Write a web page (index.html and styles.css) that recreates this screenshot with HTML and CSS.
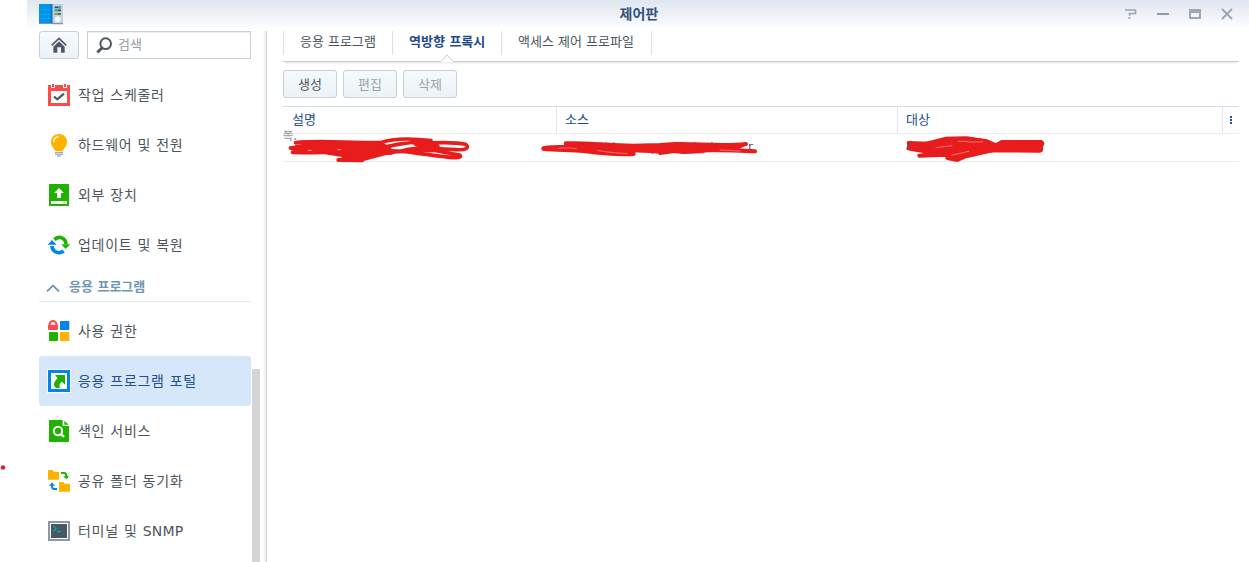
FILE: index.html
```html
<!DOCTYPE html>
<html lang="ko">
<head>
    <meta charset="UTF-8">
    <meta name="viewport" content="width=device-width, initial-scale=1.0">
    <title>제어판</title>
    <link rel="stylesheet" href="styles.css">
</head>
<body>
    <svg class="red-dot" width="6" height="6"><circle cx="3" cy="3.500" r="2.200" fill="#e81c1c"/></svg>
    <div class="window">
        <header class="titlebar">
            <svg class="app-icon" width="24" height="22" viewBox="0 0 72 66">
                <path d="M0 3h41v60H0z" fill="#0495ea"/>
                <path d="M33 3h8v60h-8z" fill="#0a7ad6"/>
                <path d="M41 3h31v58H41z" fill="#c9d1d6"/>
                <path d="M0 60h41v3H0zM41 60h31v4H41z" fill="#7f95a5"/>
                <path d="M3 20h4M12 20h23M3 34h4M12 34h23M3 46h4M12 46h23" stroke="#17b3ee" stroke-width="2"/>
                <path d="M47 13h19M47 22h19M47 33h19" stroke="#3f4a55" stroke-width="5"/>
                <path d="M58 14h8M47 22h10" stroke="#12b9e6" stroke-width="5"/>
                <path d="M47 33h10" stroke="#6bc713" stroke-width="5"/>
                <circle cx="56" cy="49" r="10" fill="#f2fbff" stroke="#a8d4e8" stroke-width="2"/>
            </svg>
            <h1>제어판</h1>
            <div class="controls">
                <svg width="12" height="12" viewBox="0 0 12 12"><path d="M0 2h10.500v3.500H4.500v2.300M3.300 10h2.200" fill="none" stroke="#9da4ad" stroke-width="1.600"/></svg>
                <svg width="12" height="12" viewBox="0 0 12 12"><path d="M0 6h12" stroke="#949ba4" stroke-width="2"/></svg>
                <svg width="12" height="12" viewBox="0 0 12 12"><path d="M0 1h12v10H0zM2 5v4h8V5z" fill="#a0a7b1" fill-rule="evenodd"/></svg>
                <svg width="12" height="12" viewBox="0 0 12 12"><path d="M1 1l10 10M11 1L1 11" stroke="#9da4ad" stroke-width="1.800"/></svg>
            </div>
        </header>

        <div class="content">
            <nav class="sidebar">
                <div class="search-row">
                    <button class="home">
                        <svg width="16" height="16" viewBox="0 0 48 48"><path d="M2 25L24 4l22 21" fill="none" stroke="#4f5965" stroke-width="5"/><path d="M7 29L24 13l17 16v18H30V31H19v16H7z" fill="#4f5965"/></svg>
                    </button>
                    <label class="search">
                        <svg width="17" height="17" viewBox="0 0 51 51"><circle cx="29" cy="20" r="16" fill="none" stroke="#4f5965" stroke-width="6"/><path d="M18 33L4 46" stroke="#4f5965" stroke-width="9"/></svg>
                        <input type="text" placeholder="검색">
                    </label>
                </div>
                <ul class="menu">
                    <li>
                        <svg width="22" height="22" viewBox="0 0 66 66"><path d="M0 3h66v63H0z" fill="#fc4b4b"/><path d="M9 21h48v36H9z" fill="#fff"/><path d="M9 0h12v12H9zM45 0h12v12H45z" fill="#fff"/><path d="M12 0h6v9h-6zM48 0h6v9h-6z" fill="#fc4b4b"/><path d="M18 38l10 8 20-17" fill="none" stroke="#4f5965" stroke-width="7"/></svg>
                        <span>작업 스케줄러</span>
                    </li>
                    <li>
                        <svg width="22" height="22" viewBox="0 0 66 66"><path d="M33 0C19 0 9 10 9 24c0 12 7 17 11 23 2 3 2 5 4 5h18c2 0 2-2 4-5 4-6 11-11 11-23C57 10 47 0 33 0z" fill="#ffb200"/><path d="M17 25c0-9 6-16 15-17" fill="none" stroke="#fff" stroke-width="4"/><path d="M21 56h24M21 61h24M27 66h12" stroke="#8b97a5" stroke-width="3"/></svg>
                        <span>하드웨어 및 전원</span>
                    </li>
                    <li>
                        <svg width="22" height="22" viewBox="0 0 66 66"><rect x="3" width="60" height="66" rx="2" fill="#1eb300"/><path d="M33 12l15 15h-9v15H27V27h-9zM9 51h48v9H9z" fill="#fff"/><path d="M45 54h6v3h-6z" fill="#ffb200"/></svg>
                        <span>외부 장치</span>
                    </li>
                    <li>
                        <svg width="22" height="22" viewBox="0 0 66 66"><path d="M19 17C33 3 53 12 54 30" fill="none" stroke="#1eb300" stroke-width="11"/><path d="M40 31h27L53 45z" fill="#1eb300"/><path d="M47 51C33 62 13 54 12 36" fill="none" stroke="#0086e5" stroke-width="11"/><path d="M-1 32L12 18l14 14z" fill="#0086e5"/></svg>
                        <span>업데이트 및 복원</span>
                    </li>
                    <li class="category">
                        <svg width="14" height="9" viewBox="0 0 14 9"><path d="M1 8.300L7 2.500l6 5.800" fill="none" stroke="#7096b4" stroke-width="1.800"/></svg>
                        <span>응용 프로그램</span>
                    </li>
                    <li>
                        <svg width="22" height="22" viewBox="0 0 66 66"><path d="M0 14h30v13q0 3-3 3H3q-3 0-3-3z" fill="#fc4b4b"/><path d="M5 16V12a10 9 0 0 1 20 0v4" fill="none" stroke="#fc4b4b" stroke-width="6"/><rect x="36" y="3" width="28" height="27" rx="2" fill="#0086e5"/><rect x="3" y="36" width="27" height="27" rx="2" fill="#1eb300"/><rect x="36" y="36" width="28" height="27" rx="2" fill="#ffb200"/></svg>
                        <span>사용 권한</span>
                    </li>
                    <li class="selected">
                        <svg width="24" height="24" viewBox="0 0 72 72"><path d="M0 0h72v72H0z" fill="#fff"/><path d="M3 3h66v66H3zM12 12v48h48V12z" fill="#0086e5" fill-rule="evenodd"/><path d="M24 18h30v29l-9-9c-9 6-9 12-5 19H27C17 48 20 39 32 28z" fill="#1eb300"/></svg>
                        <span>응용 프로그램 포털</span>
                    </li>
                    <li>
                        <svg width="22" height="22" viewBox="0 0 66 66"><path d="M3 2q0-2 2-2h39v18h19v46q0 2-2 2H5q-2 0-2-2zM49 2l13 12H49z" fill="#1eb300"/><circle cx="30" cy="33" r="12.500" fill="none" stroke="#fff" stroke-width="6"/><path d="M38 41l10 10" stroke="#fff" stroke-width="7"/></svg>
                        <span>색인 서비스</span>
                    </li>
                    <li>
                        <svg width="22" height="22" viewBox="0 0 66 66"><path d="M0 2q0-2 2-2h11l4 5h14q2 0 2 2v22H0zM33 38q0-2 2-2h11l4 5h14q2 0 2 2v22H33z" fill="#ffb200"/><path d="M39 9h9q7 0 7 8v3" fill="none" stroke="#1eb300" stroke-width="6"/><path d="M46 19h18l-9 9z" fill="#1eb300"/><path d="M27 57h-8q-7 0-7-8v-3" fill="none" stroke="#0086e5" stroke-width="6"/><path d="M3 47h18l-9-10z" fill="#0086e5"/></svg>
                        <span>공유 폴더 동기화</span>
                    </li>
                    <li>
                        <svg width="22" height="22" viewBox="0 0 66 66"><path d="M0 3h66v60H0z" fill="#8b97a5"/><path d="M6 9h54v48H6z" fill="#fff"/><path d="M9 12h48v42H9z" fill="#4b5663"/><path d="M16 18l8 8-8 8M27 35h12" fill="none" stroke="#00b2b4" stroke-width="3.500"/></svg>
                        <span>터미널 및 <span class="latin">SNMP</span></span>
                    </li>
                </ul>
                <div class="scrollbar"></div>
            </nav>

            <main class="main">
                <div class="tabs">
                    <a class="tab tab-app">응용 프로그램</a>
                    <a class="tab tab-proxy active">역방향 프록시
                        <svg class="notch" width="14" height="8" viewBox="0 0 14 8"><path d="M0 7.500L7 .7l7 6.800V8H0z" fill="#fff"/><path d="M0 7.500h1L7 .9l6 6.600h1" fill="none" stroke="#ccc"/></svg>
                    </a>
                    <a class="tab tab-access">액세스 제어 프로파일</a>
                </div>
                <div class="toolbar">
                    <button>생성</button>
                    <button disabled>편집</button>
                    <button disabled>삭제</button>
                </div>
                <div class="grid">
                    <div class="grid-row grid-head">
                        <div>설명</div>
                        <div>소스</div>
                        <div>대상</div>
                        <div class="more"><i></i><i></i><i></i></div>
                    </div>
                    <div class="grid-row grid-body">
                        <div>
                            <span class="page-label">쪽.</span>
                            <svg class="mark mark-1" width="210" height="70" viewBox="0 0 630 210">
                                <path d="M62 128C130 122 200 128 320 128L300 142C210 137 120 138 47 144C120 148 180 140 260 144C190 154 120 156 53 157C130 160 230 148 350 158L210 163L285 168L205 175L262 181L190 180" stroke-width="12"/>
                                <path class="solid" d="M62 138L130 128H318L345 145L358 158L330 163L288 174L262 181L215 170L150 160L55 158z"/>
                                <path d="M318 128C350 116 410 115 468 122C420 127 350 130 310 150M420 131C480 127 540 125 572 133C585 143 574 151 545 149C500 148 450 141 420 131C440 145 500 156 554 165C561 170 552 174 535 173C490 168 430 160 385 154L330 152" stroke-width="11"/>
                                <path class="solid" d="M415 128l75 8 5 18-90 1-50 3 40-12 40-5z"/>
                                <path d="M100 151h9M188 149h9" stroke="#fff" stroke-width="2"/>
                            </svg>
                        </div>
                        <div>
                            <span class="host-end">r</span>
                            <svg class="mark mark-2" width="240" height="70" viewBox="0 0 720 210">
                                <path d="M40 145C70 140 110 139 165 143M40 146C75 151 120 149 160 153M107 130C160 127 230 137 310 137L390 135L436 132C500 130 570 140 648 132M135 135C180 153 240 160 311 162C250 166 200 158 160 153C240 143 330 156 398 150L390 159C440 149 500 142 675 154C600 153 550 143 460 155L520 154" stroke-width="12"/>
                                <path class="solid" d="M110 130l90 3 110 3h80l46-4 110 5 60 3 42-6-30 13 20 6-118 1-60 5-60-6-12 5-75-6-5 9-60-1-90-9-53-8z"/>
                                <path d="M85 145c20-2 38-2 54 1M204 152c30 5 60 7 88 9M570 150l60 3" stroke="#fbc4c4" stroke-width="1.500" fill="none"/>
                                <path d="M207 128h8M226 128h4M250 128h4M493 127h5M544 127h4M365 160h5" stroke="#5a6470" stroke-width="2"/>
                            </svg>
                        </div>
                        <div>
                            <svg class="mark mark-3" width="180" height="70" viewBox="0 0 540 210">
                                <path d="M56 129L140 132L175 116L230 115L290 124L175 132L65 146L55 145L100 153L295 137L88 167L210 163L300 151L172 174L202 180L265 151L450 152" stroke-width="12"/>
                                <path d="M58 129l30 6 80-20 65 1 60 8 25 11 17-10h119q8 4 0 14v12H310l-75 17-60 1-35-16-75-5z" stroke-width="10" class="wide"/>
                                <path d="M138 143l48-6M184 166l52-12M204 124h28M233 126h45" stroke="#f49a9a" fill="none" stroke-width="2"/>
                                <path d="M51 131v12l10-6z" fill="#4b5663" stroke="none"/>
                            </svg>
                        </div>
                        <div></div>
                    </div>
                </div>
            </main>
        </div>
    </div>
</body>
</html>
```
FILE: styles.css
```css
* {
    box-sizing: border-box;
}

body {
    margin: 0;
    height: 562px;
    overflow: hidden;
    background-color: #fff;
    font-family: "DejaVu Sans", "Noto Sans CJK KR", sans-serif;
    font-size: 13px;
    color: #4b5560;
}

svg {
    display: block;
    flex: none;
    overflow: visible;
}

.red-dot {
    position: absolute;
    left: 0;
    top: 464px;
}

.window {
    display: flex;
    flex-direction: column;
    height: 562px;
    margin-left: 27px;
}

.titlebar {
    display: grid;
    grid-template-columns: 1fr auto 1fr;
    align-items: center;
    height: 30px;
    padding: 0 16px 2px 12px;
    background: linear-gradient(#dfe7f0, #fff);
}

h1 {
    margin: 0;
    padding-left: 6px;
    font-family: "Noto Sans CJK KR", sans-serif;
    font-size: 14px;
    line-height: 26px;
    padding-bottom: 2px;
    letter-spacing: 0.2px;
    color: #33517a;
}

.controls {
    display: flex;
    justify-content: flex-end;
    gap: 20px;
}

.content {
    display: flex;
    flex: 1;
}

.sidebar {
    position: relative;
    width: 240px;
    margin-top: 1px;
    padding-left: 12px;
    border-right: 1px solid #d8d8d8;
    box-shadow: inset -4px 0 3px -3px #ddd;
}

.search-row {
    display: flex;
    gap: 8px;
    height: 28px;
}

button {
    border: 1px solid #c5d1de;
    border-radius: 3px;
    background: linear-gradient(#f6fafe, #ecf2f8);
    font-family: inherit;
    font-size: 13px;
    color: #4b5560;
    padding: 0 0 2px;
}

button:disabled {
    color: #9aa2ad;
}

.home {
    display: flex;
    align-items: center;
    justify-content: center;
    width: 40px;
    padding: 0;
}

.search {
    display: flex;
    align-items: center;
    gap: 5px;
    width: 164px;
    padding-left: 8px;
    border: 1px solid #c5d1de;
    box-shadow: inset 0 1px 1px #eee;
}

.search input {
    width: 120px;
    padding: 0 0 2px;
    border: none;
    outline: none;
    background: transparent;
    font-family: inherit;
    font-size: 13px;
}

.search input::placeholder {
    color: #949ca8;
}

.menu {
    width: 212px;
    margin: 11px 0 0;
    padding: 0;
    list-style: none;
}

.menu li {
    display: flex;
    align-items: center;
    gap: 8px;
    height: 50px;
    padding-left: 9px;
    font-size: 14px;
    letter-spacing: 0.7px;
}

.menu li > span {
    padding-bottom: 3px;
}

.menu .latin {
    letter-spacing: 0.2px;
}

.menu li.category {
    height: 32px;
    margin-bottom: 4px;
    padding: 3px 0 0 7px;
    gap: 9px;
    border-bottom: 1px solid #e2ebf2;
    font-size: 13px;
    letter-spacing: 0;
    font-weight: bold;
    color: #7096b4;
}

.menu li.selected {
    padding-left: 8px;
    gap: 7px;
    border-radius: 3px;
    background-color: #d6e7f9;
    color: #22508c;
}

.scrollbar {
    position: absolute;
    right: 6px;
    top: 338px;
    bottom: 0;
    width: 8px;
    background-color: #d4d5d7;
}

.main {
    flex: 1;
    padding: 0 10px 0 16px;
}

.tabs {
    display: flex;
    height: 32px;
    border-bottom: 1px solid #ccc;
    box-shadow: 0 3px 2px -2px #e4e4e4;
}

.tab {
    position: relative;
    height: 24px;
    padding-left: 16px;
    border-left: 1px solid #d5e1ec;
    line-height: 22px;
    white-space: nowrap;
    margin-top: 1px;
}

.tab-app,
.tab-proxy {
    width: 109px;
}

.tab-access {
    width: 151px;
    border-right: 1px solid #d5e1ec;
}

.active {
    font-weight: bold;
    color: #1f4b88;
}

.notch {
    position: absolute;
    left: 47px;
    top: 23px;
}

.toolbar {
    display: flex;
    gap: 6px;
    padding: 8px 0;
}

.toolbar button {
    width: 54px;
    height: 28px;
}

.grid-row {
    display: grid;
    grid-template-columns: 273px 341px 325px 17px;
    border-bottom: 1px solid #ececee;
}

.grid-head {
    height: 28px;
    border-top: 1px solid #d0dfeb;
    line-height: 25px;
    color: #22508c;
}

.grid-head div {
    padding-left: 9px;
}

.grid-head div + div {
    padding-left: 8px;
    border-left: 1px solid #dbe8f5;
}

.grid-head .more {
    display: flex;
    flex-direction: column;
    align-items: center;
    justify-content: center;
    gap: 1px;
    padding: 0;
}

.more i {
    width: 2px;
    height: 2px;
    background-color: #22508c;
}

.grid-body {
    height: 28px;
}

.grid-body div {
    position: relative;
}

.page-label {
    position: absolute;
    left: 0;
    top: -3px;
    font-size: 11px;
    line-height: 12px;
    font-weight: bold;
    color: #aaa;
}

.host-end {
    position: absolute;
    left: 192px;
    top: 5px;
    font-size: 12px;
    line-height: 16px;
}

.mark {
    position: absolute;
    top: -34px;
    fill: none;
    stroke: #e81c1c;
    stroke-linecap: round;
    stroke-linejoin: round;
}

.mark .solid {
    fill: #e81c1c;
    stroke-width: 6px;
}

.mark .wide {
    fill: #e81c1c;
}

.mark-1 {
    left: -8px;
}

.mark-2 {
    left: -26px;
}

.mark-3 {
    left: -7px;
}
```
